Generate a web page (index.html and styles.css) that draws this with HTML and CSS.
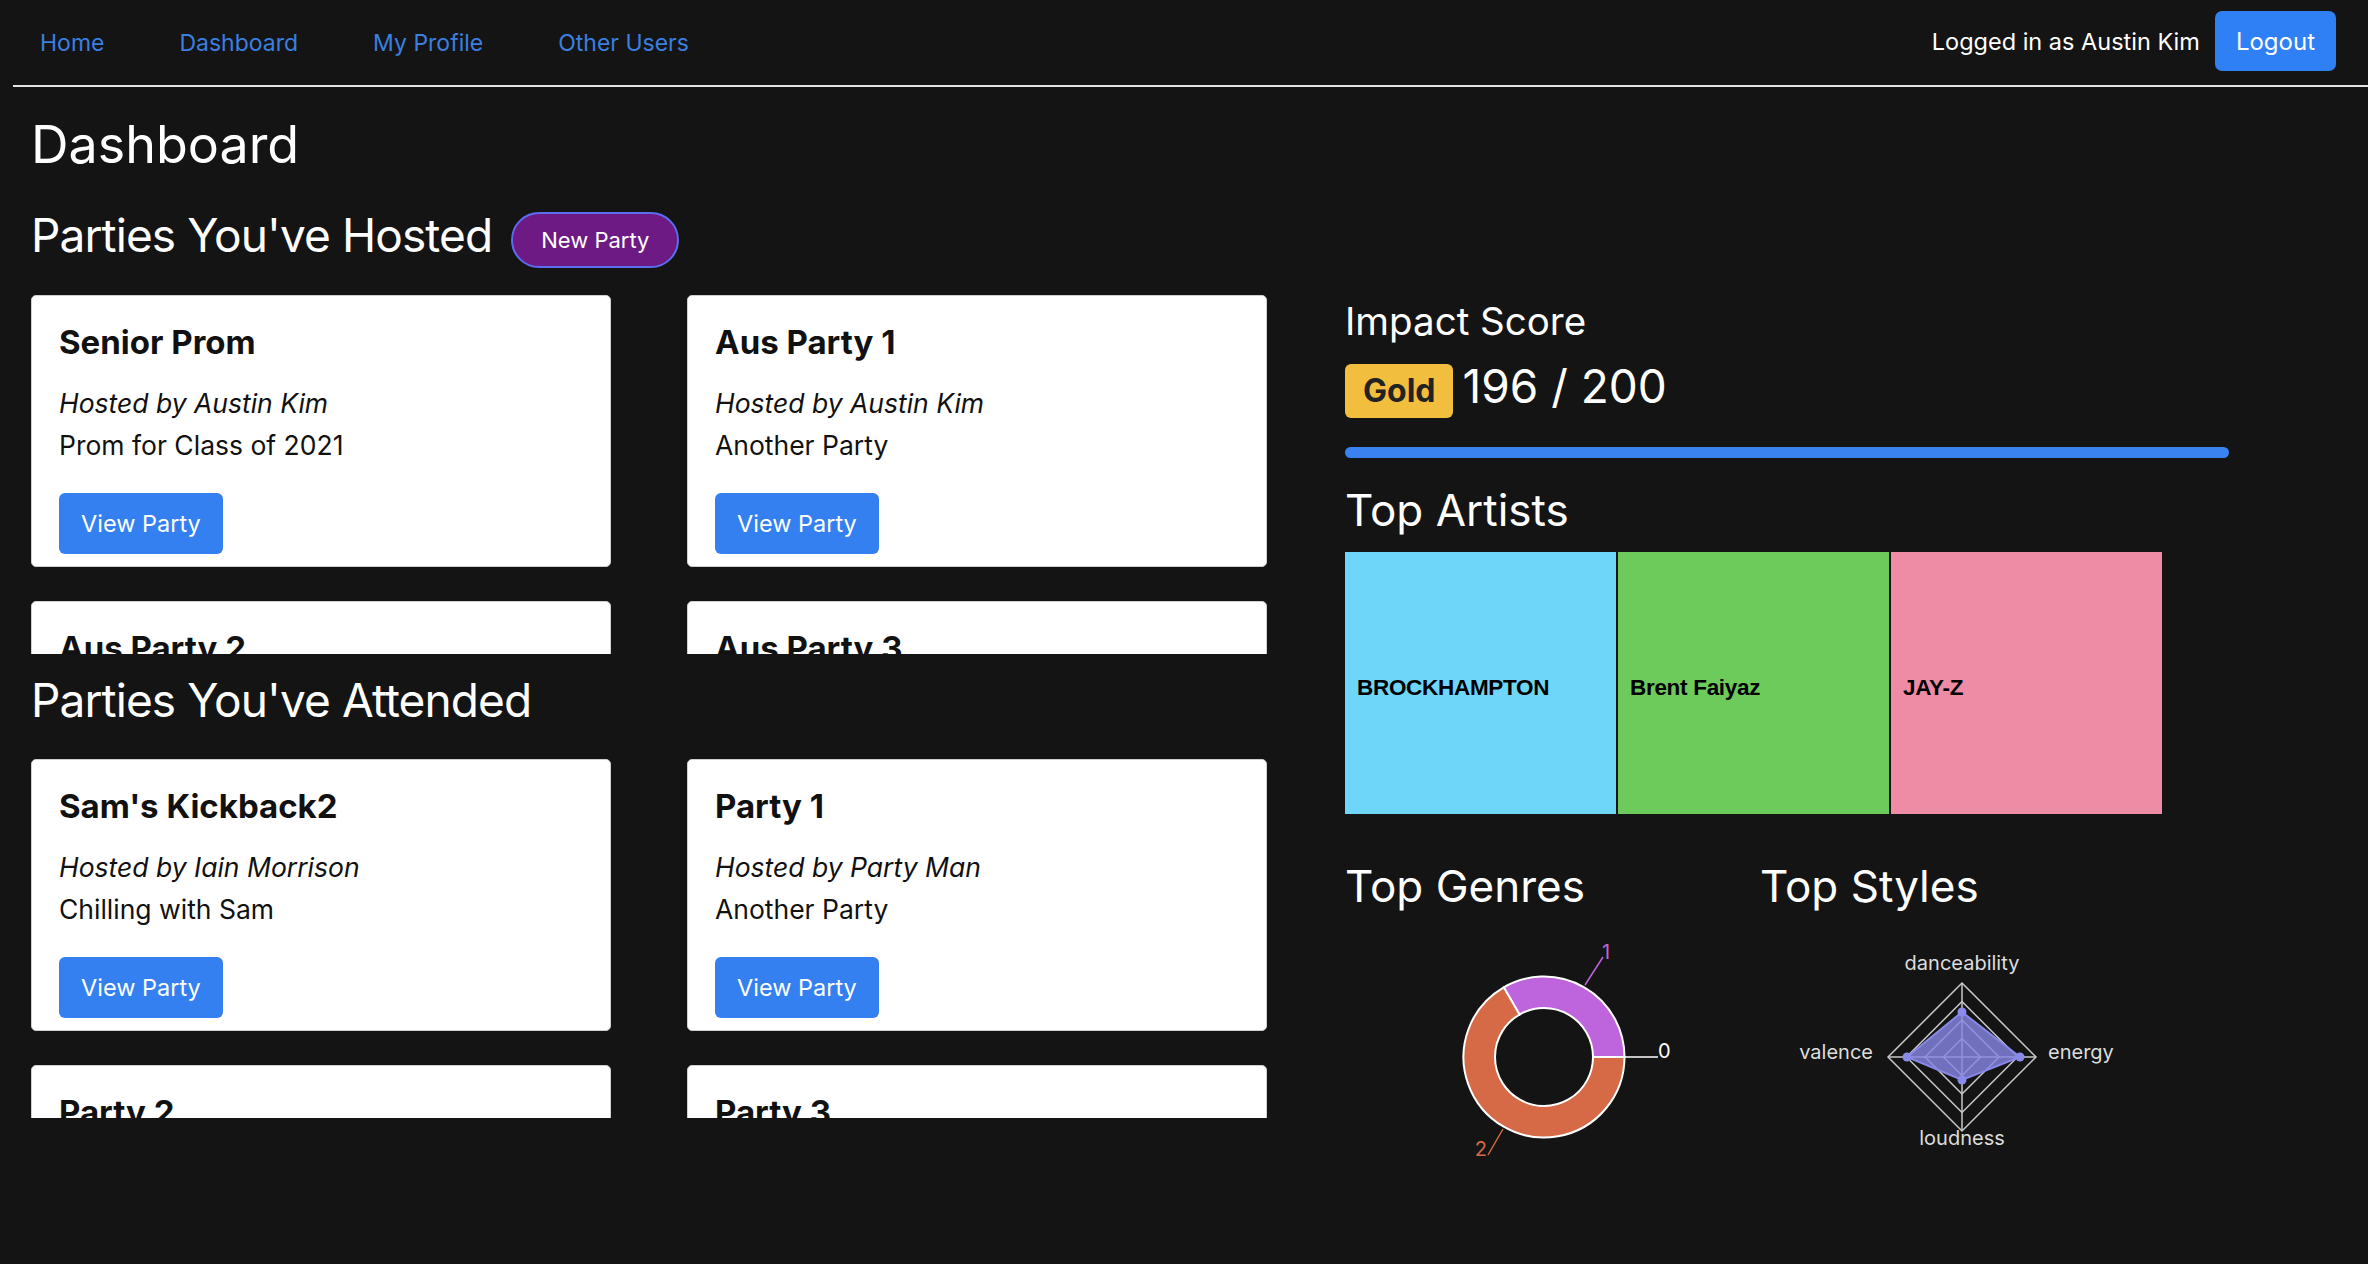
FILE: index.html
```html
<!DOCTYPE html>
<html lang="en">
<head>
<meta charset="utf-8">
<title>Dashboard</title>
<link rel="stylesheet" href="styles.css">
</head>
<body>
<nav class="topbar">
  <div class="nav-links">
    <a class="nav-link" href="#">Home</a>
    <a class="nav-link" href="#">Dashboard</a>
    <a class="nav-link" href="#">My Profile</a>
    <a class="nav-link" href="#">Other Users</a>
  </div>
  <div class="nav-user">
    <span class="user-text">Logged in as Austin Kim</span>
    <button class="btn-logout">Logout</button>
  </div>
</nav>
<main class="page">
  <h1 class="page-title">Dashboard</h1>
  <div class="layout">
    <section class="parties">
      <div class="section-head">
        <h2 class="section-title">Parties You've Hosted</h2>
        <button class="btn-new">New Party</button>
      </div>
      <div class="card-scroll">
        <div class="card-grid">
          <div class="card">
            <h3 class="card-title">Senior Prom</h3>
            <p class="card-host">Hosted by Austin Kim</p>
            <p class="card-desc">Prom for Class of 2021</p>
            <button class="btn-view">View Party</button>
          </div>
          <div class="card">
            <h3 class="card-title">Aus Party 1</h3>
            <p class="card-host">Hosted by Austin Kim</p>
            <p class="card-desc">Another Party</p>
            <button class="btn-view">View Party</button>
          </div>
          <div class="card">
            <h3 class="card-title">Aus Party 2</h3>
            <p class="card-host">Hosted by Austin Kim</p>
            <p class="card-desc">Another Party</p>
            <button class="btn-view">View Party</button>
          </div>
          <div class="card">
            <h3 class="card-title">Aus Party 3</h3>
            <p class="card-host">Hosted by Austin Kim</p>
            <p class="card-desc">Another Party</p>
            <button class="btn-view">View Party</button>
          </div>
        </div>
      </div>
      <h2 class="section-title attended">Parties You've Attended</h2>
      <div class="card-scroll second">
        <div class="card-grid">
          <div class="card">
            <h3 class="card-title">Sam's Kickback2</h3>
            <p class="card-host">Hosted by Iain Morrison</p>
            <p class="card-desc">Chilling with Sam</p>
            <button class="btn-view">View Party</button>
          </div>
          <div class="card">
            <h3 class="card-title">Party 1</h3>
            <p class="card-host">Hosted by Party Man</p>
            <p class="card-desc">Another Party</p>
            <button class="btn-view">View Party</button>
          </div>
          <div class="card">
            <h3 class="card-title">Party 2</h3>
            <p class="card-host">Hosted by Party Man</p>
            <p class="card-desc">Another Party</p>
            <button class="btn-view">View Party</button>
          </div>
          <div class="card">
            <h3 class="card-title">Party 3</h3>
            <p class="card-host">Hosted by Party Man</p>
            <p class="card-desc">Another Party</p>
            <button class="btn-view">View Party</button>
          </div>
        </div>
      </div>
    </section>

    <aside class="stats">
      <h3 class="impact-title">Impact Score</h3>
      <div class="score-row">
        <span class="badge-gold">Gold</span>
        <span class="score">196 / 200</span>
      </div>
      <div class="progress"><div class="progress-fill" style="width:98%"></div></div>

      <h3 class="stats-title">Top Artists</h3>
      <div class="treemap">
        <div class="tile tile-blue">BROCKHAMPTON</div>
        <div class="tile tile-green">Brent Faiyaz</div>
        <div class="tile tile-pink">JAY-Z</div>
      </div>

      <div class="charts">
        <div class="chart-col genres">
          <h3 class="stats-title flat">Top Genres</h3>
          <svg class="chart-svg" width="415" height="300" viewBox="0 0 415 300">
            <path d="M279.5 145 A80.5 80.5 0 0 0 158.75 75.29 L174.5 102.56 A49 49 0 0 1 248 145 Z" fill="#be64dc" stroke="#fff" stroke-width="2"/>
            <path d="M158.75 75.29 A80.5 80.5 0 1 0 279.5 145 L248 145 A49 49 0 1 1 174.5 102.56 Z" fill="#d66946" stroke="#fff" stroke-width="2"/>
            <line x1="240" y1="73" x2="258" y2="45" stroke="#be64dc" stroke-width="1.5"/>
            <text class="donut-label" x="257" y="47" fill="#be64dc">1</text>
            <line x1="280" y1="145" x2="313" y2="145" stroke="#ffffff" stroke-width="1.5"/>
            <text class="donut-label" x="313" y="146" fill="#ffffff">0</text>
            <line x1="158" y1="217" x2="143" y2="243" stroke="#d66946" stroke-width="1.5"/>
            <text class="donut-label" x="142" y="244" fill="#d66946" text-anchor="end">2</text>
          </svg>
        </div>
        <div class="chart-col styles">
          <h3 class="stats-title flat">Top Styles</h3>
          <svg class="chart-svg" width="405" height="300" viewBox="0 0 405 300">
            <g transform="translate(5,0)">
              <g fill="none" stroke="#c8c8c8" stroke-width="1.5">
                <polygon points="197,71 271,145 197,219 123,145"/>
                <polygon points="197,89.5 252.5,145 197,200.5 141.5,145"/>
                <polygon points="197,108 234,145 197,182 160,145"/>
                <polygon points="197,126.5 215.5,145 197,163.5 178.5,145"/>
                <line x1="197" y1="71" x2="197" y2="219"/>
                <line x1="123" y1="145" x2="271" y2="145"/>
              </g>
              <polygon points="197,100 255,145 197,168 142,145" fill="#8585e2" fill-opacity="0.82" stroke="#8888e8" stroke-width="2"/>
              <g fill="#8a8aea">
                <circle cx="197" cy="100" r="4.5"/>
                <circle cx="255" cy="145" r="4.5"/>
                <circle cx="197" cy="168" r="4.5"/>
                <circle cx="142" cy="145" r="4.5"/>
              </g>
              <text class="radar-label" x="197" y="58" text-anchor="middle">danceability</text>
              <text class="radar-label" x="283" y="147">energy</text>
              <text class="radar-label" x="108" y="147" text-anchor="end">valence</text>
              <text class="radar-label" x="197" y="233" text-anchor="middle">loudness</text>
            </g>
          </svg>
        </div>
      </div>
    </aside>
  </div>
</main>
</body>
</html>
```

FILE: styles.css
```css
* {
  box-sizing: border-box;
}

html, body {
  margin: 0;
  background: #141414;
}

body {
  font-family: Inter, "Noto Sans", sans-serif;
  color: #ffffff;
  overflow: hidden;
}

/* ---------- top bar ---------- */
.topbar {
  margin-left: 13px;
  height: 87px;
  border-bottom: 2px solid #e4e4e4;
  display: flex;
  align-items: center;
  justify-content: space-between;
  padding: 0 32px 3px 27px;
}

.nav-links {
  display: flex;
  gap: 75px;
  margin-top: 3px;
}

.nav-link {
  color: #3b7fe0;
  font-size: 23px;
  text-decoration: none;
}

.nav-user {
  display: flex;
  align-items: center;
}

.user-text {
  font-size: 23.5px;
  margin-right: 15px;
}

.btn-logout {
  height: 60px;
  padding: 0 21px;
  font-family: inherit;
  font-size: 24px;
  color: #ffffff;
  background: #2f80f5;
  border: none;
  border-radius: 7px;
}

/* ---------- page ---------- */
.page {
  padding-left: 31px;
}

.page-title {
  margin: 27px 0 0;
  font-size: 52px;
  line-height: 62px;
  font-weight: 400;
}

.layout {
  display: flex;
  align-items: flex-start;
}

.parties {
  width: 1236px;
  flex: none;
}

.section-head {
  display: flex;
  align-items: flex-start;
  height: 56px;
  margin-top: 31px;
}

.section-title {
  margin: 0;
  font-size: 46px;
  line-height: 56px;
  font-weight: 400;
  letter-spacing: -0.9px;
}

.section-title.attended {
  margin-top: 18px;
}

.btn-new {
  margin: 5px 0 0 19px;
  height: 56px;
  padding: 0 28px;
  border-radius: 28px;
  background: #6e1a85;
  border: 2px solid #5a6cf0;
  color: #ffffff;
  font-family: inherit;
  font-size: 22px;
}

.card-scroll {
  margin-top: 32px;
  height: 359px;
  overflow-y: auto;
  scrollbar-width: none;
}

.card-scroll.second {
  margin-top: 31px;
}

.card-grid {
  display: grid;
  grid-template-columns: 580px 580px;
  column-gap: 76px;
  row-gap: 34px;
}

.card {
  height: 272px;
  background: #ffffff;
  border: 1px solid #cfcfcf;
  border-radius: 5px;
  padding: 26px 27px;
  color: #111111;
}

.card-title {
  margin: 0;
  font-size: 33px;
  line-height: 40px;
  font-weight: 700;
}

.card-host {
  margin: 20px 0 0;
  font-size: 26.5px;
  line-height: 42px;
  font-style: italic;
}

.card-desc {
  margin: 0;
  font-size: 26.5px;
  line-height: 42px;
}

.btn-view {
  margin-top: 27px;
  height: 61px;
  padding: 0 22px;
  background: #3480f0;
  color: #ffffff;
  border: none;
  border-radius: 6px;
  font-family: inherit;
  font-size: 23.5px;
}

/* ---------- stats column ---------- */
.stats {
  margin-left: 78px;
  width: 902px;
  padding-top: 123px;
}

.impact-title {
  margin: 0;
  font-size: 38.5px;
  line-height: 44px;
  font-weight: 400;
}

.score-row {
  display: flex;
  align-items: flex-start;
  gap: 9px;
  margin-top: 21px;
}

.badge-gold {
  height: 54px;
  padding: 0 18px;
  background: #f2be3e;
  color: #222222;
  font-weight: 700;
  font-size: 32px;
  line-height: 54px;
  border-radius: 6px;
}

.score {
  font-size: 46px;
  line-height: 44px;
}

.progress {
  margin-top: 29px;
  height: 11px;
  border-radius: 6px;
}

.progress-fill {
  height: 100%;
  background: #3a82f2;
  border-radius: 6px;
}

.stats-title {
  margin: 26px 0 0;
  font-size: 44px;
  line-height: 52px;
  font-weight: 400;
}

.stats-title.flat {
  margin: 0;
}

.treemap {
  display: flex;
  gap: 2px;
  margin-top: 16px;
  width: 817px;
  height: 262px;
}

.tile {
  flex: 1;
  display: flex;
  align-items: center;
  padding: 10px 0 0 12px;
  font-family: "Liberation Sans", Arial, sans-serif;
  font-weight: 700;
  font-size: 22.5px;
  letter-spacing: -0.3px;
  color: #000000;
}

.tile-blue { background: #6ed6f8; }
.tile-green { background: #6ccb5a; }
.tile-pink { background: #ee8ca6; }

.charts {
  display: flex;
  margin-top: 46px;
}

.chart-col.genres {
  width: 415px;
  flex: none;
}

.chart-col.styles {
  width: 405px;
  flex: none;
}

.chart-svg {
  display: block;
}

.donut-label {
  font-family: Inter, "Noto Sans", sans-serif;
  font-size: 20px;
}

.radar-label {
  font-family: Inter, "Noto Sans", sans-serif;
  font-size: 20px;
  fill: #dddddd;
}
```
